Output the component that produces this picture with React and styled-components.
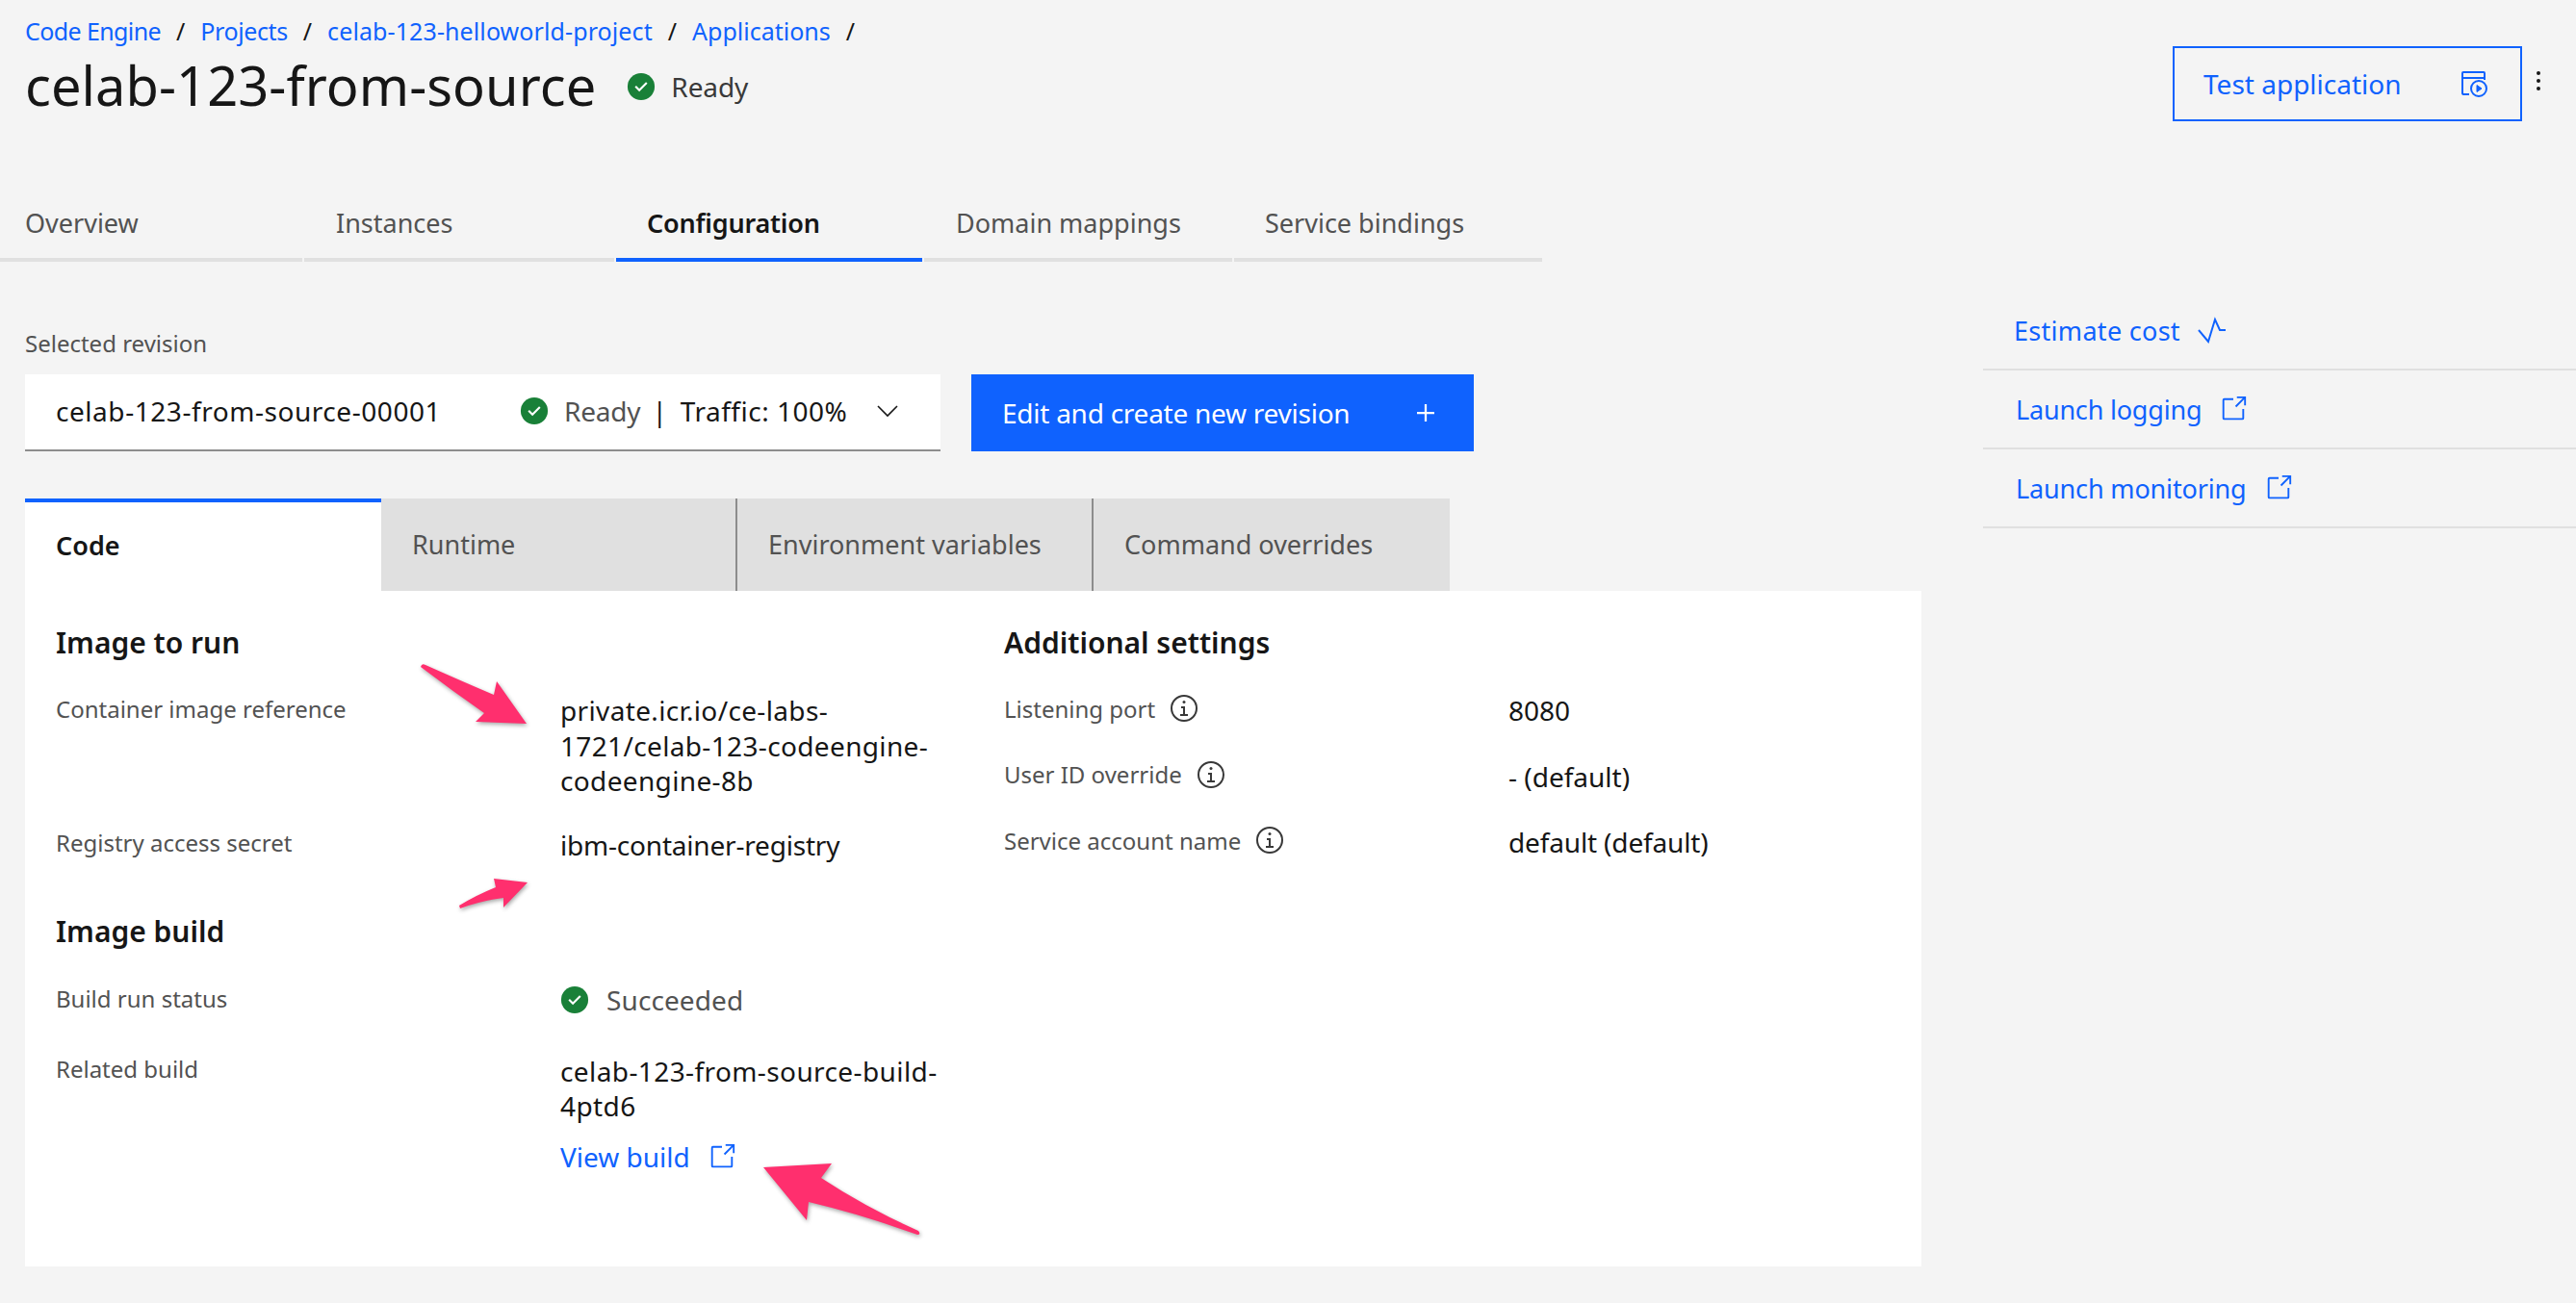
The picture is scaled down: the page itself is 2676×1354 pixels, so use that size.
import React from "react";
import styled, { createGlobalStyle } from "styled-components";

const GlobalStyle = createGlobalStyle`
  html, body { margin: 0; padding: 0; background: #f4f4f4; }
  * { box-sizing: border-box; }
  body { font-family: "Noto Sans", "Open Sans", sans-serif; color: #161616; }
`;

const BLUE = "#0f62fe";

const Page = styled.div`
  position: relative;
  width: 2676px;
  height: 1354px;
  overflow: hidden;
  background: #f4f4f4;
`;

/* header */
const Header = styled.header`
  display: flex;
  justify-content: space-between;
  height: 198px;
  padding: 0 22px 0 26px;
`;

const TitleBlock = styled.div`
  display: flex;
  flex-direction: column;
`;

const Breadcrumbs = styled.nav`
  display: flex;
  align-items: center;
  height: 64px;
  font-size: 25px;
`;

const Crumb = styled.a`
  color: ${BLUE};
  letter-spacing: ${(p) => p.$spacing}px;
`;

const CrumbSlash = styled.span`
  color: #161616;
  margin: 0 16px;
`;

const TitleRow = styled.div`
  display: flex;
  align-items: center;
  height: 48px;
`;

const Title = styled.h1`
  margin: 0;
  font-size: 56px;
  font-weight: 400;
  line-height: 48px;
  letter-spacing: 0.05px;
`;

const TitleStatus = styled.span`
  display: flex;
  align-items: center;
  gap: 16px;
  margin-left: 32px;
  padding-top: 3px;
  font-size: 28px;
  letter-spacing: -0.1px;
  color: #393939;
`;

const Actions = styled.div`
  display: flex;
  align-items: flex-start;
  padding-top: 48px;
`;

const TestButton = styled.button`
  display: flex;
  align-items: center;
  justify-content: space-between;
  width: 363px;
  height: 78px;
  padding: 0 34px 0 30px;
  border: 2px solid ${BLUE};
  background: transparent;
  color: ${BLUE};
  font: 400 28px "Noto Sans", sans-serif;
`;

const OverflowButton = styled.span`
  display: flex;
  width: 34px;
  padding: 20px 0 0 1px;
  color: #161616;
`;

/* page tabs */
const PageTabs = styled.div`
  display: flex;
  gap: 2px;
  height: 74px;
`;

const PageTab = styled.div`
  display: flex;
  align-items: center;
  width: ${(p) => p.$width}px;
  padding: 0 0 4px ${(p) => p.$pad}px;
  border-bottom: 4px solid ${(p) => (p.$active ? BLUE : "#e0e0e0")};
  font-size: 27px;
  letter-spacing: ${(p) => (p.$active ? "-0.2px" : "0")};
  font-weight: ${(p) => (p.$active ? 600 : 400)};
  color: ${(p) => (p.$active ? "#161616" : "#525252")};
`;

/* main */
const Main = styled.main`
  display: flex;
  justify-content: space-between;
  padding: 31px 0 0 26px;
`;

const Left = styled.section`
  width: 1970px;
`;

const SmallLabel = styled.div`
  display: flex;
  align-items: center;
  height: 30px;
  margin-top: 38px;
  font-size: 24px;
  color: #525252;
`;

const RevisionRow = styled.div`
  display: flex;
  gap: 32px;
  margin-top: 18px;
`;

const RevisionSelect = styled.div`
  display: flex;
  align-items: center;
  width: 951px;
  height: 80px;
  padding: 0 0 3px 32px;
  background: #fff;
  border-bottom: 2px solid #8d8d8d;
  font-size: 28px;
`;

const RevisionName = styled.span`
  width: 482px;
  letter-spacing: 0.55px;
`;

const RevisionStatus = styled.span`
  display: flex;
  align-items: center;
  gap: 16px;
  letter-spacing: -0.2px;
  color: #525252;
`;

const Pipe = styled.span`
  margin: 0 14px 0 12px;
  color: #161616;
`;

const Traffic = styled.span`
  width: 204px;
  letter-spacing: 0.5px;
`;

const PrimaryButton = styled.button`
  display: flex;
  align-items: center;
  justify-content: space-between;
  width: 522px;
  height: 80px;
  padding: 0 32px 0 32px;
  border: 0;
  background: ${BLUE};
  color: #fff;
  font: 400 28px "Noto Sans", sans-serif;
  letter-spacing: -0.25px;
`;

const ContentTabs = styled.div`
  display: flex;
  height: 96px;
  margin-top: 49px;
`;

const ContentTab = styled.div`
  display: flex;
  align-items: center;
  width: ${(p) => p.$width || 370}px;
  padding: 0 0 ${(p) => (p.$active ? 4 : 2)}px 32px;
  background: ${(p) => (p.$active ? "#fff" : "#e0e0e0")};
  border-top: ${(p) => (p.$active ? `4px solid ${BLUE}` : "0")};
  border-left: ${(p) => (p.$divider ? "2px solid #8d8d8d" : "0")};
  font-size: 27px;
  font-weight: ${(p) => (p.$active ? 600 : 400)};
  color: ${(p) => (p.$active ? "#161616" : "#525252")};
`;

const Panel = styled.div`
  display: grid;
  grid-template-columns: 985px 1fr;
  height: 702px;
  padding: 31px 0 0 32px;
  background: #fff;
`;

const Heading = styled.h2`
  display: flex;
  align-items: center;
  height: 44px;
  margin: ${(p) => p.$top || 0}px 0 0;
  font-size: 30px;
  font-weight: 600;
`;

const Field = styled.div`
  display: grid;
  grid-template-columns: 524px 1fr;
  margin-top: ${(p) => p.$top}px;
`;

const FieldLabel = styled.div`
  display: flex;
  align-items: center;
  gap: 14px;
  height: 36px;
  font-size: 24px;
  color: #525252;
`;

const FieldValue = styled.div`
  margin-top: 2px;
  font-size: 28px;
  line-height: 36.5px;
  letter-spacing: ${(p) => p.$spacing || 0}px;
  color: ${(p) => (p.$muted ? "#525252" : "#161616")};
  white-space: nowrap;
`;

const StatusValue = styled(FieldValue)`
  display: flex;
  align-items: center;
  gap: 18px;
`;

const BuildLink = styled.a`
  display: flex;
  align-items: center;
  gap: 18px;
  margin-top: 16px;
  font-size: 28px;
  line-height: 36px;
  color: ${BLUE};
`;

/* right side */
const Side = styled.aside`
  width: 616px;
`;

const SideRow = styled.a`
  display: flex;
  align-items: center;
  gap: ${(p) => p.$gap}px;
  height: 82px;
  padding-left: ${(p) => p.$pad}px;
  border-bottom: 2px solid #e0e0e0;
  font-size: 27px;
  letter-spacing: ${(p) => p.$spacing}px;
  color: ${BLUE};
`;

const ArrowLayer = styled.svg`
  position: absolute;
  top: 0;
  left: 0;
  pointer-events: none;
  filter: drop-shadow(1px 2px 2px rgba(0, 0, 0, 0.35));
`;

const Icon = ({ size = 32, children, color = "currentColor" }) => (
  <svg width={size} height={size} viewBox="0 0 32 32" fill={color} style={{ flex: "none" }}>
    {children}
  </svg>
);

const CheckIcon = ({ size = 30 }) => (
  <Icon size={size} color="#198038">
    <circle cx="16" cy="16" r="15" />
    <path fill="#fff" d="M14 21.6l-5-5L10.6 15l3.4 3.4L21.4 11l1.6 1.6z" />
  </Icon>
);

const LaunchIcon = () => (
  <Icon size={30}>
    <path d="M26 28H6a2 2 0 0 1-2-2V6a2 2 0 0 1 2-2h10v2H6v20h20V16h2v10a2 2 0 0 1-2 2z" />
    <path d="M20 2v2h6.6L18 12.6l1.4 1.4L28 5.4V12h2V2H20z" />
  </Icon>
);

const InfoIcon = () => (
  <Icon size={32} color="#393939">
    <path d="M17 22v-8h-4v2h2v6h-3v2h8v-2h-3z" />
    <path d="M16 8a1.5 1.5 0 1 0 1.5 1.5A1.5 1.5 0 0 0 16 8z" />
    <path d="M16 30a14 14 0 1 1 14-14 14 14 0 0 1-14 14zm0-26a12 12 0 1 0 12 12A12 12 0 0 0 16 4z" />
  </Icon>
);

const ActivityIcon = () => (
  <svg width="30" height="28" viewBox="0 0 30 28" fill="none" stroke="currentColor" strokeWidth="2">
    <path d="M1 14l10 12L18 3l5 11h6" />
  </svg>
);

const TestIcon = () => (
  <svg width="28" height="28" viewBox="0 0 28 28" fill="none" stroke="currentColor" strokeWidth="2">
    <path d="M9 25H3a2 2 0 0 1-1-1V3a1 1 0 0 1 1-1h21a1 1 0 0 1 1 1v7" />
    <path d="M2 8h23" />
    <circle cx="19" cy="19" r="8" />
    <path d="M17 15.500v7l5-3.500z" fill="currentColor" strokeWidth="1" />
  </svg>
);

const ChevronIcon = () => (
  <svg width="22" height="14" viewBox="0 0 22 14" fill="none" stroke="currentColor" strokeWidth="1.6" style={{ flex: "none" }}>
    <path d="M1 2l10 10L21 2" />
  </svg>
);

const tabs = [
  { label: "Overview", width: 314, pad: 26 },
  { label: "Instances", width: 322, pad: 33 },
  { label: "Configuration", width: 318, pad: 32, active: true },
  { label: "Domain mappings", width: 320, pad: 33 },
  { label: "Service bindings", width: 320, pad: 32 },
];

const crumbs = [
  { label: "Code Engine", spacing: -0.6 },
  { label: "Projects", spacing: -0.4 },
  { label: "celab-123-helloworld-project", spacing: 0.1 },
  { label: "Applications", spacing: 0 },
];

export default function App() {
  return (
    <Page>
      <GlobalStyle />
      <Header>
        <TitleBlock>
          <Breadcrumbs>
            {crumbs.map((c) => (
              <React.Fragment key={c.label}>
                <Crumb $spacing={c.spacing}>{c.label}</Crumb>
                <CrumbSlash>/</CrumbSlash>
              </React.Fragment>
            ))}
          </Breadcrumbs>
          <TitleRow>
            <Title>celab-123-from-source</Title>
            <TitleStatus>
              <CheckIcon />
              Ready
            </TitleStatus>
          </TitleRow>
        </TitleBlock>
        <Actions>
          <TestButton>
            Test application
            <TestIcon />
          </TestButton>
          <OverflowButton>
            <Icon size={32}>
              <circle cx="16" cy="8" r="2" />
              <circle cx="16" cy="16" r="2" />
              <circle cx="16" cy="24" r="2" />
            </Icon>
          </OverflowButton>
        </Actions>
      </Header>

      <PageTabs>
        {tabs.map((t) => (
          <PageTab key={t.label} $width={t.width} $pad={t.pad} $active={t.active}>
            {t.label}
          </PageTab>
        ))}
      </PageTabs>

      <Main>
        <Left>
          <SmallLabel>Selected revision</SmallLabel>
          <RevisionRow>
            <RevisionSelect>
              <RevisionName>celab-123-from-source-00001</RevisionName>
              <RevisionStatus>
                <CheckIcon />
                Ready
              </RevisionStatus>
              <Pipe>|</Pipe>
              <Traffic>Traffic: 100%</Traffic>
              <ChevronIcon />
            </RevisionSelect>
            <PrimaryButton>
              Edit and create new revision
              <Icon size={36}>
                <path d="M17 15V8h-2v7H8v2h7v7h2v-7h7v-2h-7z" />
              </Icon>
            </PrimaryButton>
          </RevisionRow>

          <ContentTabs>
            <ContentTab $active>Code</ContentTab>
            <ContentTab $width={368}>Runtime</ContentTab>
            <ContentTab $divider>Environment variables</ContentTab>
            <ContentTab $divider $width={372}>Command overrides</ContentTab>
          </ContentTabs>

          <Panel>
            <div>
              <Heading>Image to run</Heading>
              <Field $top={29}>
                <FieldLabel>Container image reference</FieldLabel>
                <FieldValue $spacing={0.35}>
                  private.icr.io/ce-labs-
                  <br />
                  1721/celab-123-codeengine-
                  <br />
                  codeengine-8b
                </FieldValue>
              </Field>
              <Field $top={28}>
                <FieldLabel>Registry access secret</FieldLabel>
                <FieldValue $spacing={-0.2}>ibm-container-registry</FieldValue>
              </Field>
              <Heading $top={49}>Image build</Heading>
              <Field $top={30}>
                <FieldLabel>Build run status</FieldLabel>
                <StatusValue $muted $spacing={0.1}>
                  <CheckIcon />
                  Succeeded
                </StatusValue>
              </Field>
              <Field $top={35}>
                <FieldLabel>Related build</FieldLabel>
                <div>
                  <FieldValue $spacing={0.4}>
                    celab-123-from-source-build-
                    <br />
                    4ptd6
                  </FieldValue>
                  <BuildLink>
                    View build
                    <LaunchIcon />
                  </BuildLink>
                </div>
              </Field>
            </div>
            <div>
              <Heading>Additional settings</Heading>
              <Field $top={29}>
                <FieldLabel>
                  Listening port
                  <InfoIcon />
                </FieldLabel>
                <FieldValue>8080</FieldValue>
              </Field>
              <Field $top={30}>
                <FieldLabel>
                  User ID override
                  <InfoIcon />
                </FieldLabel>
                <FieldValue>- (default)</FieldValue>
              </Field>
              <Field $top={30}>
                <FieldLabel>
                  Service account name
                  <InfoIcon />
                </FieldLabel>
                <FieldValue $spacing={-0.15}>default (default)</FieldValue>
              </Field>
            </div>
          </Panel>
        </Left>

        <Side>
          <SideRow $pad={32} $gap={18} $spacing={0.3}>
            Estimate cost
            <ActivityIcon />
          </SideRow>
          <SideRow $pad={34} $gap={18} $spacing={-0.2}>
            Launch logging
            <LaunchIcon />
          </SideRow>
          <SideRow $pad={34} $gap={18} $spacing={-0.15}>
            Launch monitoring
            <LaunchIcon />
          </SideRow>
        </Side>
      </Main>

      <ArrowLayer width="2676" height="1354" viewBox="0 0 2676 1354" fill="#ff2f6e">
        <path d="M437 693Q438 689 442 691Q480 708 513 722L516 708L547 752L494 750L503 741Q470 718 437 693Z" />
        <path d="M478 944L477 941Q495 930 515 922L513 913L548 917L523 943V933Q500 936 478 944Z" />
        <path d="M793 1213L864 1209L853 1224Q900 1255 954 1279Q957 1283 953 1283Q895 1262 840 1249L838 1268Z" />
      </ArrowLayer>
    </Page>
  );
}
